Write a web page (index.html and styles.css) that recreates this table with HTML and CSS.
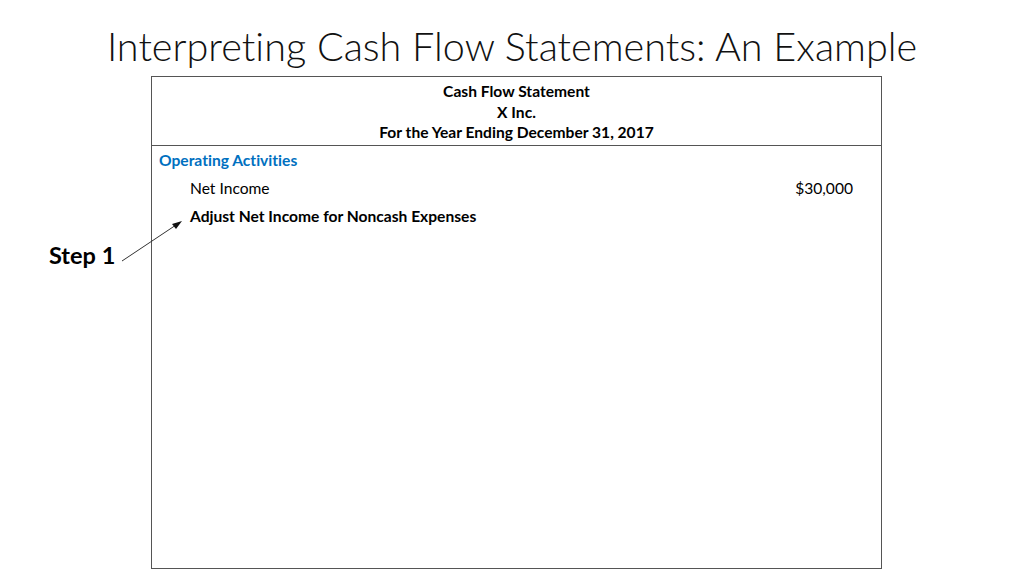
FILE: index.html
```html
<!DOCTYPE html>
<html>
<head>
<meta charset="utf-8">
<link rel="stylesheet" href="styles.css">
</head>
<body>
<div class="slide">
  <h1 class="title">Interpreting Cash Flow Statements: An Example</h1>
  <div class="statement">
    <div class="st-head">
      <div>Cash Flow Statement</div>
      <div>X Inc.</div>
      <div>For the Year Ending December 31, 2017</div>
    </div>
    <div class="st-body">
      <div class="section">Operating Activities</div>
      <div class="row first"><span>Net Income</span><span class="amt">$30,000</span></div>
      <div class="row bold"><span>Adjust Net Income for Noncash Expenses</span></div>
    </div>
  </div>
  <div class="step">Step 1</div>
  <svg class="arrow" width="80" height="60" viewBox="0 0 80 60">
    <line x1="2" y1="49" x2="56" y2="13" stroke="#333" stroke-width="1"/>
    <polygon points="62,9 52,12 56,17" fill="#111"/>
  </svg>
</div>
</body>
</html>
```
FILE: styles.css
```css
html, body { margin: 0; padding: 0; background: #fff; }
.slide {
  position: relative;
  width: 1024px;
  height: 576px;
  display: flex;
  flex-direction: column;
  font-family: Lato, "Open Sans", sans-serif;
  font-variant-ligatures: none;
  color: #000;
}
.title {
  margin: 0;
  padding-top: 23px;
  height: 53px;
  text-align: center;
  font-weight: 300;
  font-size: 39.6px;
  line-height: 46px;
  color: #111;
}
.statement {
  margin-left: 151px;
  width: 729px;
  height: 491px;
  border: 1.5px solid #555;
  display: flex;
  flex-direction: column;
}
.st-head {
  border-bottom: 1.5px solid #555;
  text-align: center;
  font-weight: bold;
  font-size: 15.6px;
  line-height: 20.5px;
  padding-top: 4px;
  height: 64px;
}
.st-body {
  padding: 3px 28px 0 7px;
  font-size: 15.6px;
}
.section {
  color: #0070c0;
  font-weight: bold;
  line-height: 22px;
}
.row {
  display: flex;
  justify-content: space-between;
  padding-left: 31px;
  line-height: 28px;
}
.row.first { margin-top: 3px; }
.bold { font-weight: bold; }
.step {
  position: absolute;
  left: 49px;
  top: 240px;
  font-weight: bold;
  font-size: 23.5px;
  line-height: 30px;
}
.arrow {
  position: absolute;
  left: 120px;
  top: 212px;
}
```
